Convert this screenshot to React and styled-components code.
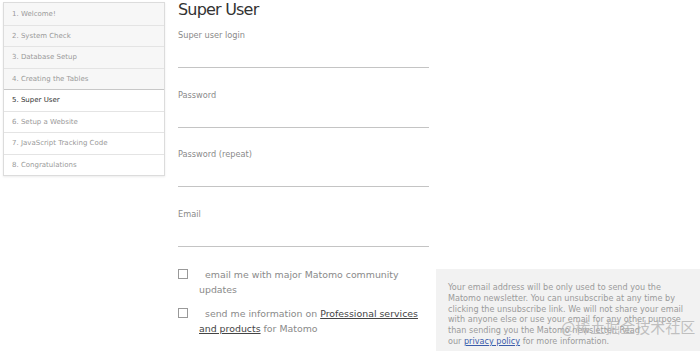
import styled, { createGlobalStyle } from "styled-components";

const Global = createGlobalStyle`
  html, body {
    margin: 0;
    padding: 0;
    background: #ffffff;
    font-family: "DejaVu Sans", "Noto Sans CJK SC", sans-serif;
    overflow: hidden;
  }
`;

const Page = styled.div`
  position: relative;
  width: 700px;
  height: 351px;
  overflow: hidden;
  display: flex;
  align-items: flex-start;
`;

const Steps = styled.ul`
  list-style: none;
  margin: 2px 0 0 3px;
  padding: 0;
  width: 160px;
  border: 1px solid #dcdcdc;
  box-shadow: 0 1px 2px rgba(0, 0, 0, 0.08);
`;

const Step = styled.li`
  height: 21.5px;
  box-sizing: border-box;
  display: flex;
  align-items: center;
  padding-left: 8px;
  font-size: 7px;
  color: ${({ current }) => (current ? "#333" : "#9a9a9a")};
  background: ${({ done }) => (done ? "#f7f7f7" : "#ffffff")};
  border-top: 1px solid ${({ current }) => (current ? "#c8c8c8" : "#e4e4e4")};

  &:first-child {
    border-top: none;
  }
`;

const Main = styled.div`
  margin-left: 13px;
  width: 251px;
`;

const Title = styled.h2`
  margin: 0;
  font-size: 16px;
  font-weight: 400;
  letter-spacing: -0.8px;
  color: #333;
  line-height: 19px;
`;

const Field = styled.div`
  height: 59.5px;
  box-sizing: border-box;
  padding-top: 11px;
`;

const Label = styled.div`
  font-size: 8.2px;
  color: #8a8a8a;
  line-height: 10px;
`;

const Input = styled.div`
  margin-top: 26px;
  height: 1px;
  border-bottom: 1px solid #c4c4c4;
`;

const Checks = styled.div`
  margin-top: 11px;
  display: flex;
  flex-direction: column;
  gap: 10px;
`;

const Check = styled.label`
  display: flex;
  align-items: flex-start;
  font-size: 9.4px;
  line-height: 14.5px;
  color: #8a8a8a;
`;

const Box = styled.span`
  flex: none;
  width: 8px;
  height: 8px;
  border: 1px solid #999;
  margin: 1px 11px 0 0;
`;

const CheckText = styled.span`
  text-indent: 6px;
`;

const Link = styled.a`
  color: #444;
  text-decoration: underline;
`;

const Note = styled.div`
  position: absolute;
  left: 436px;
  top: 269px;
  width: 264px;
  height: 82px;
  box-sizing: border-box;
  background: #f2f2f2;
  padding: 13px 12px 0 12px;
  font-size: 8.1px;
  line-height: 10.8px;
  color: #9b9b9b;
`;

const Privacy = styled.a`
  color: #3a5caa;
  text-decoration: underline;
`;

const Watermark = styled.div`
  position: absolute;
  left: 561px;
  top: 317px;
  font-size: 15px;
  line-height: 20px;
  color: rgba(175, 175, 175, 0.75);
  font-family: "Noto Sans CJK SC", sans-serif;
`;

const steps = [
  "1. Welcome!",
  "2. System Check",
  "3. Database Setup",
  "4. Creating the Tables",
  "5. Super User",
  "6. Setup a Website",
  "7. JavaScript Tracking Code",
  "8. Congratulations",
];

const fields = ["Super user login", "Password", "Password (repeat)", "Email"];

export default function App() {
  return (
    <Page>
      <Global />
      <Steps>
        {steps.map((s, i) => (
          <Step key={s} done={i < 4} current={i === 4}>
            {s}
          </Step>
        ))}
      </Steps>
      <Main>
        <Title>Super User</Title>
        {fields.map((f) => (
          <Field key={f}>
            <Label>{f}</Label>
            <Input />
          </Field>
        ))}
        <Checks>
          <Check>
            <Box />
            <CheckText>email me with major Matomo community updates</CheckText>
          </Check>
          <Check>
            <Box />
            <CheckText>
              send me information on <Link>Professional services and products</Link> for Matomo
            </CheckText>
          </Check>
        </Checks>
      </Main>
      <Note>
        Your email address will be only used to send you the Matomo newsletter. You can
        unsubscribe at any time by clicking the unsubscribe link. We will not share your
        email with anyone else or use your email for any other purpose than sending you
        the Matomo newsletter. Read
        <br />
        our <Privacy>privacy policy</Privacy> for more information.
      </Note>
      <Watermark>@稀土掘金技术社区</Watermark>
    </Page>
  );
}
